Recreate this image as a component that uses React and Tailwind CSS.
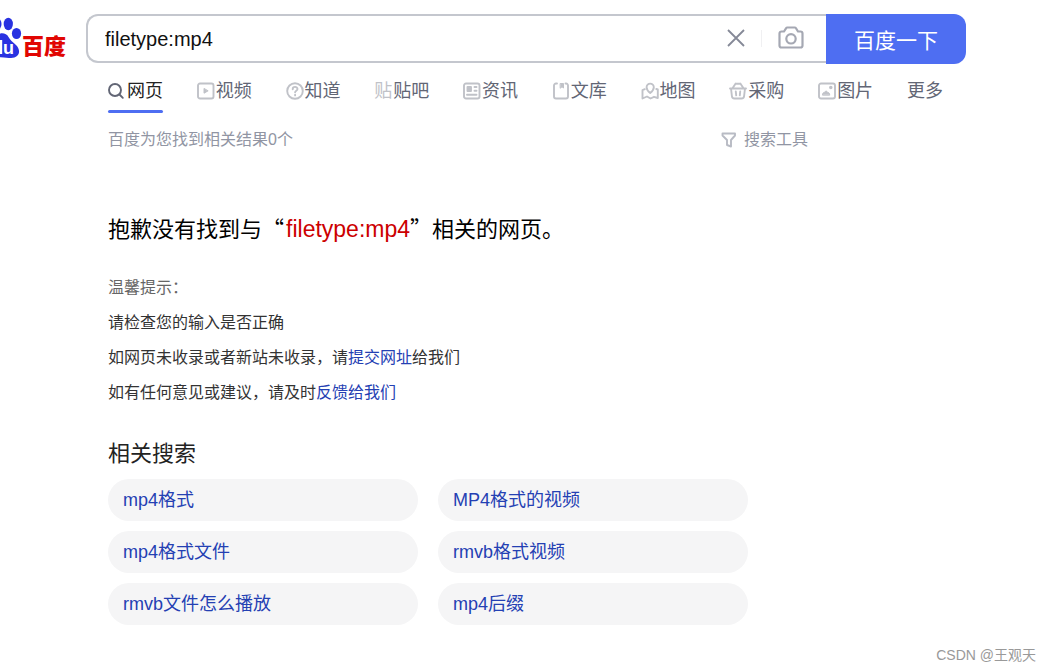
import { useState } from 'react';

const TABS = [
  { name: '网页', icon: 'search' },
  { name: '视频', icon: 'video' },
  { name: '知道', icon: 'question' },
  { name: '贴吧', icon: 'tieba' },
  { name: '资讯', icon: 'news' },
  { name: '文库', icon: 'doc' },
  { name: '地图', icon: 'map' },
  { name: '采购', icon: 'basket' },
  { name: '图片', icon: 'image' },
  { name: '更多' },
];

const RELATED = ['mp4格式', 'MP4格式的视频', 'mp4格式文件', 'rmvb格式视频', 'rmvb文件怎么播放', 'mp4后缀'];

// 18x18 glyph bodies, stroked with currentColor
const GLYPHS = {
  search: (
    <>
      <circle cx="7" cy="8" r="6" />
      <path d="M11.500 12.500l3.300 3.300" />
    </>
  ),
  video: (
    <>
      <rect x="1" y="1.5" width="15.5" height="15" rx="2" />
      <path d="M7 6.8v4.400l3.800-2.200z" fill="currentColor" strokeWidth="1" />
    </>
  ),
  question: (
    <>
      <circle cx="9" cy="9" r="7.8" />
      <path d="M6.7 7.2c0-3 4.8-3 4.8-.2 0 1.7-2.4 1.7-2.4 3.300M9.100 12.800v.600" />
    </>
  ),
  news: (
    <>
      <rect x="1" y="1.5" width="15.5" height="15" rx="2" />
      <path d="M4.500 5h3.500v4h-3.500z" fill="currentColor" />
      <path d="M11.500 5h2M11.500 8.800h2M4 12.800h9.500" />
    </>
  ),
  doc: (
    <>
      <path d="M5 1.500H4a2 2 0 0 0-2 2v11a2 2 0 0 0 2 2h10a2 2 0 0 0 2-2v-11a2 2 0 0 0-2-2h-.500" />
      <path d="M8.500 1.500h3v4.500l-1.500-1.200L8.500 6z" fill="currentColor" strokeWidth="1" />
    </>
  ),
  map: (
    <>
      <path d="M9.200 11C6.700 9 5.600 7.300 5.600 5.200a3.600 3.600 0 0 1 7.200 0C12.800 7.300 11.700 9 9.200 11z" />
      <path d="M3.800 7.200L1.500 8.200v8.300L6 14.500l3.500 2L13 14.800l3.800 1.200V7.500l-1.500-.500" />
    </>
  ),
  basket: (
    <>
      <path d="M1 6.500h16M2 6.500l.900 7.500a2.600 2.600 0 0 0 2.600 2.500h7a2.600 2.600 0 0 0 2.600-2.500l.900-7.500M3.500 6.300L6.500 1.800M14.500 6.300L11.500 1.800M6.500 1.800h5M6.800 9.500l.400 3.800M11.200 9.500l-.400 3.800" />
    </>
  ),
  image: (
    <>
      <rect x="1" y="1.500" width="16" height="15" rx="2" />
      <path d="M4.500 12.800c0-1.800 1-2.300 2-2.500 1-1.800 2.600-1.300 3 0 1.500.200 2.200 1.200 2.200 2.500z" fill="currentColor" strokeWidth="1" />
      <circle cx="12.800" cy="5.500" r=".8" fill="currentColor" />
    </>
  ),
};

function TabIcon({ name }) {
  if (name === 'tieba') {
    return <span aria-hidden="true" className="text-[#c0c2c8]">贴</span>;
  }
  return (
    <svg
      viewBox="0 0 18 18"
      className={`size-[18px] ${name === 'search' ? 'text-[#626675]' : 'text-[#c0c2c8]'}`}
      fill="none"
      stroke="currentColor"
      strokeWidth="1.9"
      strokeLinecap="round"
      strokeLinejoin="round"
      aria-hidden="true"
    >
      {GLYPHS[name]}
    </svg>
  );
}

function Logo() {
  return (
    <a href="#home" aria-label="百度" className="w-[86px] shrink-0">
      <svg viewBox="0 0 70 50" className="h-[50px] w-[70px]">
        <g fill="#2932e1">
          <ellipse cx="-2.500" cy="10" rx="4" ry="5.800" />
          <ellipse cx="8.300" cy="10" rx="4.600" ry="6.200" />
          <ellipse cx="16.500" cy="19.500" rx="4.600" ry="5.600" />
          <path d="M-5 24c2.500-6 11-6 13.500-1 1.800 3.500 4.500 5 7.500 8 5.500 5.500 3.500 13-5 13-4 0-7-1.500-16-.500z" />
        </g>
        <path d="M0 26h2.200v14H0z" fill="#fff" />
        <text x="3" y="40" fill="#fff" fontSize="18" className="font-['Liberation_Sans',sans-serif] font-bold">u</text>
        <text x="22" y="40" fill="#e10602" fontSize="22" className="font-['Noto_Sans_CJK_SC',sans-serif] font-black">百度</text>
      </svg>
    </a>
  );
}

function SearchBar() {
  const [query, setQuery] = useState('filetype:mp4');

  return (
    <form className="flex h-[50px] max-w-[880px] flex-1" onSubmit={(e) => e.preventDefault()}>
      <div className="flex h-[49px] flex-1 items-center rounded-l-xl border-2 border-r-0 border-[#c4c7ce] pr-[22px] pb-px pl-[17px]">
        <input
          type="text"
          aria-label="搜索"
          value={query}
          onChange={(e) => setQuery(e.target.value)}
          className="min-w-0 flex-1 pt-[2px] text-[20px] text-[#111] outline-none"
        />
        <button type="button" aria-label="清空" onClick={() => setQuery('')} className="text-[#858997]">
          <svg viewBox="0 0 18 18" className="size-[18px]" fill="none" stroke="currentColor" strokeWidth="1.8">
            <path d="M1 1l16 16M17 1L1 17" />
          </svg>
        </button>
        <span className="mx-4 h-[17px] w-px bg-[#f0f0f2]" />
        <button type="button" aria-label="按图片搜索" className="text-[#a5a8b3]">
          <svg viewBox="0 0 26 24" className="h-6 w-[26px]" fill="none" stroke="currentColor" strokeWidth="2.2" strokeLinejoin="round">
            <path d="M3.500 5.500H6l2-3.200c.3-.5.7-.8 1.300-.8h7.400c.6 0 1 .3 1.300.8l2 3.200h2.500a2 2 0 0 1 2 2V19.500a2 2 0 0 1-2 2h-19a2 2 0 0 1-2-2V7.500a2 2 0 0 1 2-2z" />
            <circle cx="13" cy="12.800" r="4.700" />
          </svg>
        </button>
      </div>
      <button type="submit" className="w-[140px] rounded-r-xl bg-[#4e6ef2] pt-1 text-[21px] text-white">
        百度一下
      </button>
    </form>
  );
}

export default function App() {
  return (
    <div className="bg-white font-['Liberation_Sans','Noto_Sans_CJK_SC',sans-serif] text-[#333]">
      <header className="flex pt-[14px] pr-[85px]">
        <Logo />
        <SearchBar />
      </header>

      <div className="px-[108px]">
        <nav className="flex max-w-[835px] justify-between pt-3">
          {TABS.map(({ name, icon }, i) => (
            <a
              key={name}
              href={`#${name}`}
              className={`flex h-[37px] items-start gap-px text-[18px] leading-[30px] whitespace-nowrap ${
                i === 0
                  ? 'text-[#222] after:absolute after:inset-x-0 after:bottom-0 after:h-[3px] after:rounded-full after:bg-[#4e6ef2] relative'
                  : 'text-[#626675]'
              }`}
            >
              {icon && (
                <span className="flex h-[30px] items-center">
                  <TabIcon name={icon} />
                </span>
              )}
              {name}
            </a>
          ))}
        </nav>

        <div className="flex max-w-[700px] items-center justify-between pt-[15px] text-[16px] leading-6 text-[#9195a3]">
          <span>百度为您找到相关结果0个</span>
          <button type="button" className="flex items-center gap-[7px]">
            <svg viewBox="0 0 16 16" className="size-4 text-[#b8bbc4]" fill="none" stroke="currentColor" strokeWidth="1.9" strokeLinejoin="round">
              <path d="M1.500 1.500h12.500v2L10 8v6.500l-4-1.500V8L1.500 3.500z" />
            </svg>
            搜索工具
          </button>
        </div>

        <main>
          <h1 className="mt-[59px] text-[22px] leading-8 text-black">
            抱歉没有找到与
            <span className="font-['Noto_Sans_CJK_SC',sans-serif]">“</span>
            <span className="ml-[2px] text-[23px] text-[#c00]">filetype:mp4</span>
            <span className="font-['Noto_Sans_CJK_SC',sans-serif]">”</span>
            相关的网页。
          </h1>

          <div className="mt-6 text-[16px] leading-[35px]">
            <p className="text-[#666]">温馨提示：</p>
            <p>请检查您的输入是否正确</p>
            <p>
              如网页未收录或者新站未收录，请<a href="#submit" className="text-[#2440b3]">提交网址</a>给我们
            </p>
            <p>
              如有任何意见或建议，请及时<a href="#feedback" className="text-[#2440b3]">反馈给我们</a>
            </p>
          </div>

          <h2 className="mt-7 text-[22px] leading-8 text-[#222]">相关搜索</h2>
          <div className="mt-[9px] grid max-w-[640px] grid-cols-2 gap-x-5 gap-y-[10px]">
            {RELATED.map((word) => (
              <a key={word} href={`#${word}`} className="h-[42px] rounded-full bg-[#f5f5f6] px-[15px] text-[18px] leading-[42px] text-[#2440b3]">
                {word}
              </a>
            ))}
          </div>
        </main>
      </div>

      <footer className="pt-5 pr-[15px] text-right text-[14px] leading-5 text-[#999]">CSDN @王观天</footer>
    </div>
  );
}
